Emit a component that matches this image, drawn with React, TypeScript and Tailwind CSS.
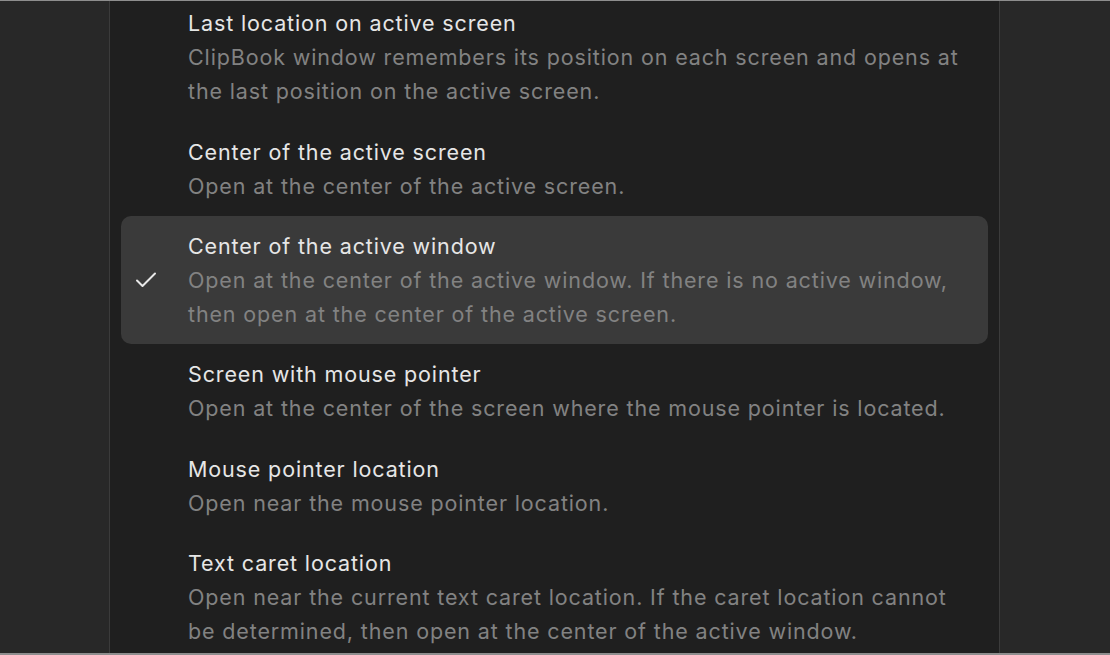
const options = [
  {
    title: "Last location on active screen",
    desc: "ClipBook window remembers its position on each screen and opens at the last position on the active screen.",
  },
  {
    title: "Center of the active screen",
    desc: "Open at the center of the active screen.",
  },
  {
    title: "Center of the active window",
    desc: "Open at the center of the active window. If there is no active window, then open at the center of the active screen.",
    selected: true,
  },
  {
    title: "Screen with mouse pointer",
    desc: "Open at the center of the screen where the mouse pointer is located.",
  },
  {
    title: "Mouse pointer location",
    desc: "Open near the mouse pointer location.",
  },
  {
    title: "Text caret location",
    desc: "Open near the current text caret location. If the caret location cannot be determined, then open at the center of the active window.",
  },
]

const Check = () => (
  <svg width="22" height="18" viewBox="0 0 22 18" fill="none" stroke="#e8e8e8" strokeWidth="2" strokeLinecap="round" strokeLinejoin="round">
    <path d="M2 9.5l5.5 5.5L20 2.5" />
  </svg>
)

export default function App() {
  return (
    <div
      className="flex h-[655px] w-[1110px] overflow-hidden border-t border-b-2 border-[#8e8e8e] bg-[#282828]"
      style={{ fontFamily: "Inter, 'Noto Sans', sans-serif" }}
    >
      <div className="w-[109px] shrink-0" />
      <div className="h-full w-[891px] shrink-0 overflow-hidden border-x border-[#3b3b3b] bg-[#1f1f1f] px-[11px]">
        <div className="mt-[-8px] flex flex-col">
          {options.map((o) => (
            <div
              key={o.title}
              className={`relative rounded-[10px] py-[13.2px] pl-[67px] pr-[20px] text-[21.5px] leading-[34px] tracking-[0.04em] ${
                o.selected ? "bg-[#3a3a3a]" : ""
              }`}
            >
              {o.selected && (
                <div className="absolute left-[14px] top-0 flex h-full items-center">
                  <Check />
                </div>
              )}
              <div className="text-[#e6e6e6]">{o.title}</div>
              <div className="text-[#828282]">{o.desc}</div>
            </div>
          ))}
        </div>
      </div>
      <div className="flex-1" />
    </div>
  )
}
